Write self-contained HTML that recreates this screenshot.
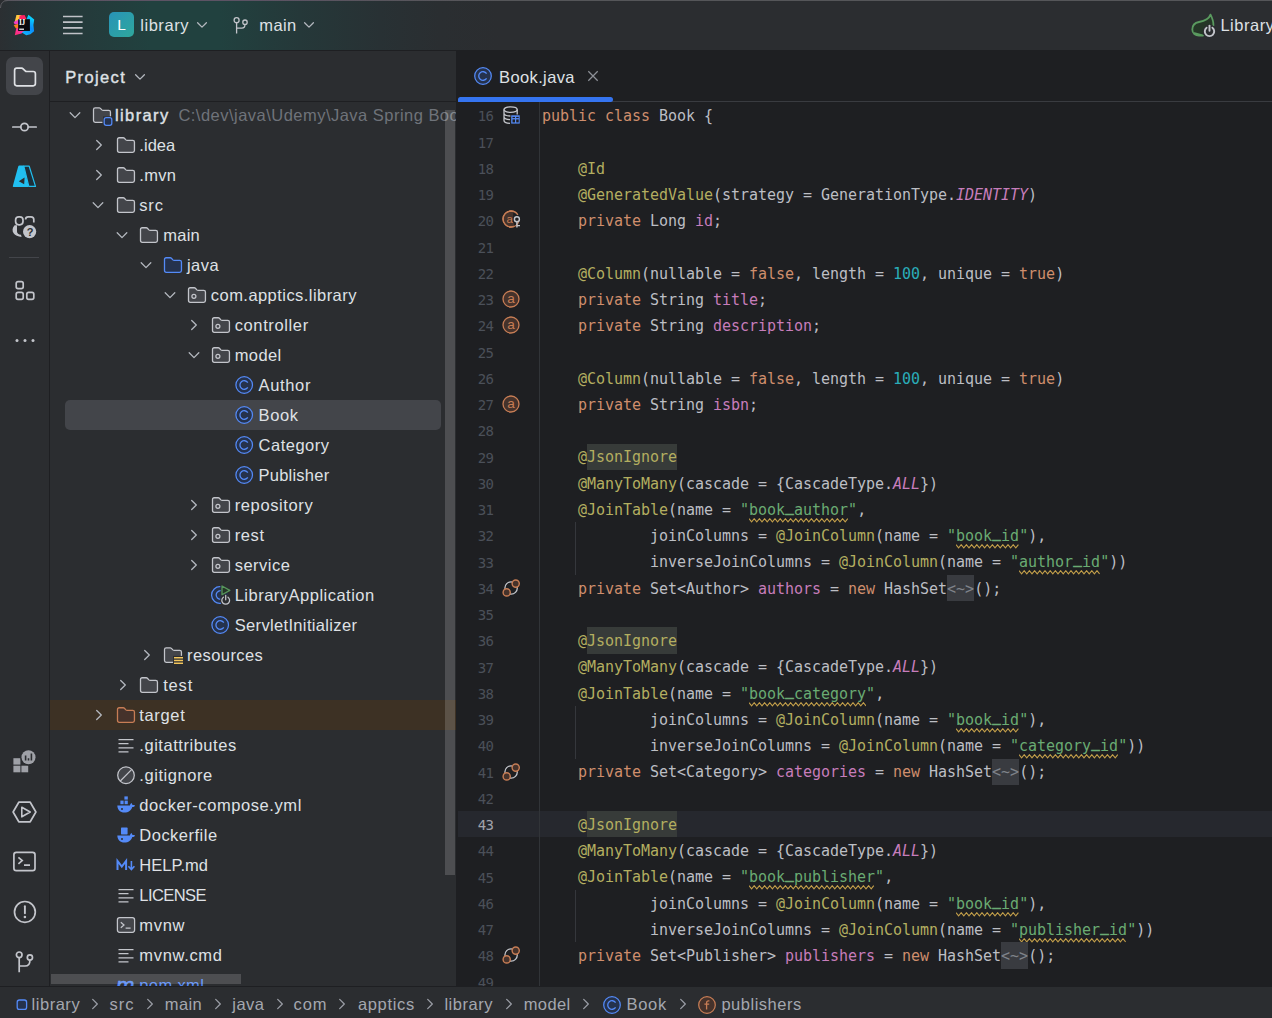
<!DOCTYPE html>
<html lang="en"><head><meta charset="utf-8"><title>library – Book.java</title>
<style>
*{box-sizing:border-box;margin:0;padding:0}
html,body{width:1272px;height:1018px;overflow:hidden;background:#2b2d30}
body{position:relative;font-family:"Liberation Sans",sans-serif;font-size:16.5px;letter-spacing:.3px;color:#dfe1e5;-webkit-font-smoothing:antialiased}
.abs{position:absolute}
#title{left:0;top:0;width:1272px;height:50px;background:linear-gradient(90deg,#2b2f32 0px,#283336 20px,#25393a 70px,#21413f 150px,#21413f 220px,#253839 300px,#283134 380px,#2a2e31 440px,#2b2d30 500px)}
#topline{left:0;top:0;width:1272px;height:1px;background:linear-gradient(90deg,#58565e 0px,#5c5364 120px,#5c5364 260px,#58555d 380px,#555659 500px)}
#stripe{left:0;top:51px;width:49px;height:935px;background:#2b2d30}
#stripeB{left:49px;top:51px;width:1px;height:935px;background:#1e1f22}
#hline{left:0;top:50px;width:1272px;height:1px;background:#1e1f22}
#proj{left:50px;top:51px;width:406px;height:935px;background:#2b2d30;overflow:hidden}
#projH{left:50px;top:101px;width:406px;height:1px;background:#1e1f22}
#split{left:456px;top:51px;width:2px;height:935px;background:#1e1f22}
#editor{left:458px;top:51px;width:814px;height:935px;background:#1e1f22;overflow:hidden}
#tabline{left:458px;top:101px;width:814px;height:1px;background:#393b40}
#tabul{left:458px;top:97px;width:155px;height:5px;background:#3574f0;border-radius:3px 3px 3px 1px}
#gutsep{left:539px;top:102px;width:1px;height:884px;background:#313438}
#status{left:0;top:986px;width:1272px;height:32px;background:#2b2d30;border-top:1px solid #1e1f22}
.t{position:absolute;white-space:pre;line-height:20px;height:20px}
.row{position:absolute;left:51px;width:405px;height:30px}
.code{position:absolute;left:542px;white-space:pre;font-family:"DejaVu Sans Mono","Liberation Mono",monospace;font-size:15px;letter-spacing:-.03px;color:#bcbec4;height:26px;line-height:26px}
.ln{position:absolute;left:463.4px;width:30px;text-align:right;white-space:pre;font-family:"DejaVu Sans Mono","Liberation Mono",monospace;font-size:14px;letter-spacing:-.6px;color:#4b5059;height:26px;line-height:26px}
.k{color:#cf8e6d}.a{color:#b3ae60}.s{color:#6aab73}.n{color:#2aacb8}.f{color:#c77dbb}.c{color:#c77dbb;font-style:italic}
.hl{}
.fold{color:#7f838a}
.w{position:relative;display:inline-block}

.us{position:relative;top:-2.6px;font-weight:bold}
svg.wv{position:absolute;left:0;top:21px;overflow:hidden}
svg{position:absolute;overflow:visible}
</style></head>
<body>
<div class="abs" id="title"></div><div class="abs" id="topline"></div>
<svg style="left:0;top:0" width="10" height="10" viewBox="0 0 10 10" fill="none"><path d="M0 0 H8 Q0 0 0 8 Z" fill="#2b2d30"/><path d="M.5 8 Q.5 .5 8 .5" stroke="#5a5b60" stroke-width="1"/></svg>
<div class="abs" id="hline"></div>
<div class="abs" id="stripe"></div><div class="abs" id="stripeB"></div>
<div class="abs" id="proj"></div><div class="abs" id="projH"></div><div class="abs" id="split"></div>
<div class="abs" id="editor"></div>
<div class="abs" style="left:458px;top:811.00px;width:814px;height:26.25px;background:#26282e"></div>
<div class="abs" id="gutsep"></div>
<div class="abs" style="left:575px;top:522.25px;width:1px;height:52.50px;background:#35373c"></div>
<div class="abs" style="left:575px;top:706.00px;width:1px;height:52.50px;background:#35373c"></div>
<div class="abs" style="left:575px;top:889.75px;width:1px;height:52.50px;background:#35373c"></div>
<div class="ln" style="top:103px;color:#4b5059">16</div>
<div class="code" style="top:103px"><span class="k">public</span> <span class="k">class</span> Book {</div>
<div class="ln" style="top:130px;color:#4b5059">17</div>
<div class="ln" style="top:156px;color:#4b5059">18</div>
<div class="code" style="top:156px">    <span class="a">@Id</span></div>
<div class="ln" style="top:182px;color:#4b5059">19</div>
<div class="code" style="top:182px">    <span class="a">@GeneratedValue</span>(strategy = GenerationType.<span class="c">IDENTITY</span>)</div>
<div class="ln" style="top:208px;color:#4b5059">20</div>
<div class="code" style="top:208px">    <span class="k">private</span> Long <span class="f">id</span>;</div>
<div class="ln" style="top:235px;color:#4b5059">21</div>
<div class="ln" style="top:261px;color:#4b5059">22</div>
<div class="code" style="top:261px">    <span class="a">@Column</span>(nullable = <span class="k">false</span>, length = <span class="n">100</span>, unique = <span class="k">true</span>)</div>
<div class="ln" style="top:287px;color:#4b5059">23</div>
<div class="code" style="top:287px">    <span class="k">private</span> String <span class="f">title</span>;</div>
<div class="ln" style="top:313px;color:#4b5059">24</div>
<div class="code" style="top:313px">    <span class="k">private</span> String <span class="f">description</span>;</div>
<div class="ln" style="top:340px;color:#4b5059">25</div>
<div class="ln" style="top:366px;color:#4b5059">26</div>
<div class="code" style="top:366px">    <span class="a">@Column</span>(nullable = <span class="k">false</span>, length = <span class="n">100</span>, unique = <span class="k">true</span>)</div>
<div class="ln" style="top:392px;color:#4b5059">27</div>
<div class="code" style="top:392px">    <span class="k">private</span> String <span class="f">isbn</span>;</div>
<div class="ln" style="top:418px;color:#4b5059">28</div>
<div class="ln" style="top:445px;color:#4b5059">29</div>
<div class="abs" style="left:587px;top:443.50px;width:90px;height:26.25px;background:#373b39"></div>
<div class="code" style="top:444px">    <span class="a">@</span><span class="a hl">JsonIgnore</span></div>
<div class="ln" style="top:471px;color:#4b5059">30</div>
<div class="code" style="top:471px">    <span class="a">@ManyToMany</span>(cascade = {CascadeType.<span class="c">ALL</span>})</div>
<div class="ln" style="top:497px;color:#4b5059">31</div>
<div class="code" style="top:497px">    <span class="a">@JoinTable</span>(name = <span class="s">&quot;</span><span class="s w">book<span class=us>_</span>author<svg class="wv" width="99" height="5" viewBox="0 0 99 5" fill="none"><polyline points="0.0,0.7 2.6,3.9 5.2,0.7 7.8,3.9 10.4,0.7 13.0,3.9 15.6,0.7 18.2,3.9 20.8,0.7 23.4,3.9 26.0,0.7 28.6,3.9 31.2,0.7 33.8,3.9 36.4,0.7 39.0,3.9 41.6,0.7 44.2,3.9 46.8,0.7 49.4,3.9 52.0,0.7 54.6,3.9 57.2,0.7 59.8,3.9 62.4,0.7 65.0,3.9 67.6,0.7 70.2,3.9 72.8,0.7 75.4,3.9 78.0,0.7 80.6,3.9 83.2,0.7 85.8,3.9 88.4,0.7 91.0,3.9 93.6,0.7 96.2,3.9 98.8,0.7" stroke="#c29e4a" stroke-width="1.1" fill="none"/></svg></span><span class="s">&quot;</span>,</div>
<div class="ln" style="top:523px;color:#4b5059">32</div>
<div class="code" style="top:523px">            joinColumns = <span class="a">@JoinColumn</span>(name = <span class="s">&quot;</span><span class="s w">book<span class=us>_</span>id<svg class="wv" width="63" height="5" viewBox="0 0 63 5" fill="none"><polyline points="0.0,0.7 2.6,3.9 5.2,0.7 7.8,3.9 10.4,0.7 13.0,3.9 15.6,0.7 18.2,3.9 20.8,0.7 23.4,3.9 26.0,0.7 28.6,3.9 31.2,0.7 33.8,3.9 36.4,0.7 39.0,3.9 41.6,0.7 44.2,3.9 46.8,0.7 49.4,3.9 52.0,0.7 54.6,3.9 57.2,0.7 59.8,3.9 62.4,0.7" stroke="#c29e4a" stroke-width="1.1" fill="none"/></svg></span><span class="s">&quot;</span>),</div>
<div class="ln" style="top:550px;color:#4b5059">33</div>
<div class="code" style="top:549px">            inverseJoinColumns = <span class="a">@JoinColumn</span>(name = <span class="s">&quot;</span><span class="s w">author<span class=us>_</span>id<svg class="wv" width="81" height="5" viewBox="0 0 81 5" fill="none"><polyline points="0.0,0.7 2.6,3.9 5.2,0.7 7.8,3.9 10.4,0.7 13.0,3.9 15.6,0.7 18.2,3.9 20.8,0.7 23.4,3.9 26.0,0.7 28.6,3.9 31.2,0.7 33.8,3.9 36.4,0.7 39.0,3.9 41.6,0.7 44.2,3.9 46.8,0.7 49.4,3.9 52.0,0.7 54.6,3.9 57.2,0.7 59.8,3.9 62.4,0.7 65.0,3.9 67.6,0.7 70.2,3.9 72.8,0.7 75.4,3.9 78.0,0.7 80.6,3.9" stroke="#c29e4a" stroke-width="1.1" fill="none"/></svg></span><span class="s">&quot;</span>))</div>
<div class="ln" style="top:576px;color:#4b5059">34</div>
<div class="abs" style="left:947px;top:574.75px;width:27px;height:26.25px;background:#393b40"></div>
<div class="code" style="top:576px">    <span class="k">private</span> Set&lt;Author&gt; <span class="f">authors</span> = <span class="k">new</span> HashSet<span class="fold">&lt;~&gt;</span>();</div>
<div class="ln" style="top:602px;color:#4b5059">35</div>
<div class="ln" style="top:628px;color:#4b5059">36</div>
<div class="abs" style="left:587px;top:627.25px;width:90px;height:26.25px;background:#373b39"></div>
<div class="code" style="top:628px">    <span class="a">@</span><span class="a hl">JsonIgnore</span></div>
<div class="ln" style="top:655px;color:#4b5059">37</div>
<div class="code" style="top:654px">    <span class="a">@ManyToMany</span>(cascade = {CascadeType.<span class="c">ALL</span>})</div>
<div class="ln" style="top:681px;color:#4b5059">38</div>
<div class="code" style="top:681px">    <span class="a">@JoinTable</span>(name = <span class="s">&quot;</span><span class="s w">book<span class=us>_</span>category<svg class="wv" width="117" height="5" viewBox="0 0 117 5" fill="none"><polyline points="0.0,0.7 2.6,3.9 5.2,0.7 7.8,3.9 10.4,0.7 13.0,3.9 15.6,0.7 18.2,3.9 20.8,0.7 23.4,3.9 26.0,0.7 28.6,3.9 31.2,0.7 33.8,3.9 36.4,0.7 39.0,3.9 41.6,0.7 44.2,3.9 46.8,0.7 49.4,3.9 52.0,0.7 54.6,3.9 57.2,0.7 59.8,3.9 62.4,0.7 65.0,3.9 67.6,0.7 70.2,3.9 72.8,0.7 75.4,3.9 78.0,0.7 80.6,3.9 83.2,0.7 85.8,3.9 88.4,0.7 91.0,3.9 93.6,0.7 96.2,3.9 98.8,0.7 101.4,3.9 104.0,0.7 106.6,3.9 109.2,0.7 111.8,3.9 114.4,0.7 117.0,3.9" stroke="#c29e4a" stroke-width="1.1" fill="none"/></svg></span><span class="s">&quot;</span>,</div>
<div class="ln" style="top:707px;color:#4b5059">39</div>
<div class="code" style="top:707px">            joinColumns = <span class="a">@JoinColumn</span>(name = <span class="s">&quot;</span><span class="s w">book<span class=us>_</span>id<svg class="wv" width="63" height="5" viewBox="0 0 63 5" fill="none"><polyline points="0.0,0.7 2.6,3.9 5.2,0.7 7.8,3.9 10.4,0.7 13.0,3.9 15.6,0.7 18.2,3.9 20.8,0.7 23.4,3.9 26.0,0.7 28.6,3.9 31.2,0.7 33.8,3.9 36.4,0.7 39.0,3.9 41.6,0.7 44.2,3.9 46.8,0.7 49.4,3.9 52.0,0.7 54.6,3.9 57.2,0.7 59.8,3.9 62.4,0.7" stroke="#c29e4a" stroke-width="1.1" fill="none"/></svg></span><span class="s">&quot;</span>),</div>
<div class="ln" style="top:733px;color:#4b5059">40</div>
<div class="code" style="top:733px">            inverseJoinColumns = <span class="a">@JoinColumn</span>(name = <span class="s">&quot;</span><span class="s w">category<span class=us>_</span>id<svg class="wv" width="99" height="5" viewBox="0 0 99 5" fill="none"><polyline points="0.0,0.7 2.6,3.9 5.2,0.7 7.8,3.9 10.4,0.7 13.0,3.9 15.6,0.7 18.2,3.9 20.8,0.7 23.4,3.9 26.0,0.7 28.6,3.9 31.2,0.7 33.8,3.9 36.4,0.7 39.0,3.9 41.6,0.7 44.2,3.9 46.8,0.7 49.4,3.9 52.0,0.7 54.6,3.9 57.2,0.7 59.8,3.9 62.4,0.7 65.0,3.9 67.6,0.7 70.2,3.9 72.8,0.7 75.4,3.9 78.0,0.7 80.6,3.9 83.2,0.7 85.8,3.9 88.4,0.7 91.0,3.9 93.6,0.7 96.2,3.9 98.8,0.7" stroke="#c29e4a" stroke-width="1.1" fill="none"/></svg></span><span class="s">&quot;</span>))</div>
<div class="ln" style="top:760px;color:#4b5059">41</div>
<div class="abs" style="left:992px;top:758.50px;width:27px;height:26.25px;background:#393b40"></div>
<div class="code" style="top:759px">    <span class="k">private</span> Set&lt;Category&gt; <span class="f">categories</span> = <span class="k">new</span> HashSet<span class="fold">&lt;~&gt;</span>();</div>
<div class="ln" style="top:786px;color:#4b5059">42</div>
<div class="ln" style="top:812px;color:#a1a3ab">43</div>
<div class="abs" style="left:587px;top:811.00px;width:90px;height:26.25px;background:#373b39"></div>
<div class="code" style="top:812px">    <span class="a">@</span><span class="a hl">JsonIgnore</span></div>
<div class="ln" style="top:838px;color:#4b5059">44</div>
<div class="code" style="top:838px">    <span class="a">@ManyToMany</span>(cascade = {CascadeType.<span class="c">ALL</span>})</div>
<div class="ln" style="top:865px;color:#4b5059">45</div>
<div class="code" style="top:864px">    <span class="a">@JoinTable</span>(name = <span class="s">&quot;</span><span class="s w">book<span class=us>_</span>publisher<svg class="wv" width="126" height="5" viewBox="0 0 126 5" fill="none"><polyline points="0.0,0.7 2.6,3.9 5.2,0.7 7.8,3.9 10.4,0.7 13.0,3.9 15.6,0.7 18.2,3.9 20.8,0.7 23.4,3.9 26.0,0.7 28.6,3.9 31.2,0.7 33.8,3.9 36.4,0.7 39.0,3.9 41.6,0.7 44.2,3.9 46.8,0.7 49.4,3.9 52.0,0.7 54.6,3.9 57.2,0.7 59.8,3.9 62.4,0.7 65.0,3.9 67.6,0.7 70.2,3.9 72.8,0.7 75.4,3.9 78.0,0.7 80.6,3.9 83.2,0.7 85.8,3.9 88.4,0.7 91.0,3.9 93.6,0.7 96.2,3.9 98.8,0.7 101.4,3.9 104.0,0.7 106.6,3.9 109.2,0.7 111.8,3.9 114.4,0.7 117.0,3.9 119.6,0.7 122.2,3.9 124.8,0.7" stroke="#c29e4a" stroke-width="1.1" fill="none"/></svg></span><span class="s">&quot;</span>,</div>
<div class="ln" style="top:891px;color:#4b5059">46</div>
<div class="code" style="top:891px">            joinColumns = <span class="a">@JoinColumn</span>(name = <span class="s">&quot;</span><span class="s w">book<span class=us>_</span>id<svg class="wv" width="63" height="5" viewBox="0 0 63 5" fill="none"><polyline points="0.0,0.7 2.6,3.9 5.2,0.7 7.8,3.9 10.4,0.7 13.0,3.9 15.6,0.7 18.2,3.9 20.8,0.7 23.4,3.9 26.0,0.7 28.6,3.9 31.2,0.7 33.8,3.9 36.4,0.7 39.0,3.9 41.6,0.7 44.2,3.9 46.8,0.7 49.4,3.9 52.0,0.7 54.6,3.9 57.2,0.7 59.8,3.9 62.4,0.7" stroke="#c29e4a" stroke-width="1.1" fill="none"/></svg></span><span class="s">&quot;</span>),</div>
<div class="ln" style="top:917px;color:#4b5059">47</div>
<div class="code" style="top:917px">            inverseJoinColumns = <span class="a">@JoinColumn</span>(name = <span class="s">&quot;</span><span class="s w">publisher<span class=us>_</span>id<svg class="wv" width="108" height="5" viewBox="0 0 108 5" fill="none"><polyline points="0.0,0.7 2.6,3.9 5.2,0.7 7.8,3.9 10.4,0.7 13.0,3.9 15.6,0.7 18.2,3.9 20.8,0.7 23.4,3.9 26.0,0.7 28.6,3.9 31.2,0.7 33.8,3.9 36.4,0.7 39.0,3.9 41.6,0.7 44.2,3.9 46.8,0.7 49.4,3.9 52.0,0.7 54.6,3.9 57.2,0.7 59.8,3.9 62.4,0.7 65.0,3.9 67.6,0.7 70.2,3.9 72.8,0.7 75.4,3.9 78.0,0.7 80.6,3.9 83.2,0.7 85.8,3.9 88.4,0.7 91.0,3.9 93.6,0.7 96.2,3.9 98.8,0.7 101.4,3.9 104.0,0.7 106.6,3.9" stroke="#c29e4a" stroke-width="1.1" fill="none"/></svg></span><span class="s">&quot;</span>))</div>
<div class="ln" style="top:943px;color:#4b5059">48</div>
<div class="abs" style="left:1001px;top:942.25px;width:27px;height:26.25px;background:#393b40"></div>
<div class="code" style="top:943px">    <span class="k">private</span> Set&lt;Publisher&gt; <span class="f">publishers</span> = <span class="k">new</span> HashSet<span class="fold">&lt;~&gt;</span>();</div>
<div class="ln" style="top:970px;color:#4b5059">49</div>
<div class="abs" id="tabline"></div><div class="abs" id="tabul"></div>
<div class="abs" id="status"></div>
<div class="abs" style="left:50px;top:102px;width:406px;height:884px;overflow:hidden"><div class="abs" style="left:1px;top:0;width:405px;height:884px">
<div class="abs" style="left:-1px;top:598px;width:406px;height:30px;background:#3d3124"></div>
<div class="abs" style="left:14px;top:298px;width:376px;height:30px;background:#43454a;border-radius:5px"></div>
<svg style="left:16.6px;top:6.199999999999999px" width="14" height="14" viewBox="0 0 14 14" fill="none"><path d="M2.2 4.8 L7 9.6 L11.8 4.8" stroke="#b4b8bf" stroke-width="1.3" fill="none" stroke-linecap="round" stroke-linejoin="round"/></svg>
<svg style="left:41px;top:3px" width="20" height="20" viewBox="0 0 20 20" fill="none"><path d="M10 17.35 H3.2 Q1.5 17.35 1.5 15.6 V4.5 Q1.5 2.75 3.2 2.75 H7.2 Q7.9 2.75 8.4 3.3 L9.9 4.9 Q10.4 5.4 11.1 5.4 H16.7 Q18.45 5.4 18.45 7.1 V11" fill="#43454a" stroke="#c3c5cb" stroke-width="1.25" stroke-linejoin="round" stroke-linecap="round"/><rect x="11" y="11.5" width="10" height="10" fill="#2b2d30"/><rect x="12.2" y="12.7" width="7.6" height="7.6" rx="2" fill="#25324d" stroke="#548af7" stroke-width="1.25"/></svg>
<div class="t" style="left:63.9px;top:3px;-webkit-text-stroke:.4px #dfe1e5;letter-spacing:1.411px">library</div>
<div class="t" style="left:127.4px;top:3px;color:#6f737a;letter-spacing:0.477px">C:\dev\java\Udemy\Java Spring Boot\library</div>
<svg style="left:40.99999999999999px;top:36px" width="14" height="14" viewBox="0 0 14 14" fill="none"><path d="M4.7 2.5 L9.3 7 L4.7 11.5" stroke="#b4b8bf" stroke-width="1.3" fill="none" stroke-linecap="round" stroke-linejoin="round"/></svg>
<svg style="left:64.6px;top:33px" width="20" height="20" viewBox="0 0 20 20" fill="none"><path d="M1.5 4.5 Q1.5 2.75 3.2 2.75 H7.2 Q7.9 2.75 8.4 3.3 L9.9 4.9 Q10.4 5.4 11.1 5.4 H16.7 Q18.45 5.4 18.45 7.1 V15.6 Q18.45 17.35 16.7 17.35 H3.2 Q1.5 17.35 1.5 15.6 Z" fill="#43454a" stroke="#c3c5cb" stroke-width="1.3" stroke-linejoin="round"/></svg>
<div class="t" style="left:88.30000000000001px;top:33px;letter-spacing:0.044px">.idea</div>
<svg style="left:40.99999999999999px;top:66px" width="14" height="14" viewBox="0 0 14 14" fill="none"><path d="M4.7 2.5 L9.3 7 L4.7 11.5" stroke="#b4b8bf" stroke-width="1.3" fill="none" stroke-linecap="round" stroke-linejoin="round"/></svg>
<svg style="left:64.6px;top:63px" width="20" height="20" viewBox="0 0 20 20" fill="none"><path d="M1.5 4.5 Q1.5 2.75 3.2 2.75 H7.2 Q7.9 2.75 8.4 3.3 L9.9 4.9 Q10.4 5.4 11.1 5.4 H16.7 Q18.45 5.4 18.45 7.1 V15.6 Q18.45 17.35 16.7 17.35 H3.2 Q1.5 17.35 1.5 15.6 Z" fill="#43454a" stroke="#c3c5cb" stroke-width="1.3" stroke-linejoin="round"/></svg>
<div class="t" style="left:88.30000000000001px;top:63px;letter-spacing:0.261px">.mvn</div>
<svg style="left:40.199999999999996px;top:96.2px" width="14" height="14" viewBox="0 0 14 14" fill="none"><path d="M2.2 4.8 L7 9.6 L11.8 4.8" stroke="#b4b8bf" stroke-width="1.3" fill="none" stroke-linecap="round" stroke-linejoin="round"/></svg>
<svg style="left:64.6px;top:93px" width="20" height="20" viewBox="0 0 20 20" fill="none"><path d="M1.5 4.5 Q1.5 2.75 3.2 2.75 H7.2 Q7.9 2.75 8.4 3.3 L9.9 4.9 Q10.4 5.4 11.1 5.4 H16.7 Q18.45 5.4 18.45 7.1 V15.6 Q18.45 17.35 16.7 17.35 H3.2 Q1.5 17.35 1.5 15.6 Z" fill="#43454a" stroke="#c3c5cb" stroke-width="1.3" stroke-linejoin="round"/></svg>
<div class="t" style="left:88.30000000000001px;top:93px;letter-spacing:0.802px">src</div>
<svg style="left:64.05000000000001px;top:126.19999999999999px" width="14" height="14" viewBox="0 0 14 14" fill="none"><path d="M2.2 4.8 L7 9.6 L11.8 4.8" stroke="#b4b8bf" stroke-width="1.3" fill="none" stroke-linecap="round" stroke-linejoin="round"/></svg>
<svg style="left:88.45px;top:123px" width="20" height="20" viewBox="0 0 20 20" fill="none"><path d="M1.5 4.5 Q1.5 2.75 3.2 2.75 H7.2 Q7.9 2.75 8.4 3.3 L9.9 4.9 Q10.4 5.4 11.1 5.4 H16.7 Q18.45 5.4 18.45 7.1 V15.6 Q18.45 17.35 16.7 17.35 H3.2 Q1.5 17.35 1.5 15.6 Z" fill="#43454a" stroke="#c3c5cb" stroke-width="1.3" stroke-linejoin="round"/></svg>
<div class="t" style="left:112.15px;top:123px;letter-spacing:0.284px">main</div>
<svg style="left:87.9px;top:156.2px" width="14" height="14" viewBox="0 0 14 14" fill="none"><path d="M2.2 4.8 L7 9.6 L11.8 4.8" stroke="#b4b8bf" stroke-width="1.3" fill="none" stroke-linecap="round" stroke-linejoin="round"/></svg>
<svg style="left:112.3px;top:153px" width="20" height="20" viewBox="0 0 20 20" fill="none"><path d="M1.5 4.5 Q1.5 2.75 3.2 2.75 H7.2 Q7.9 2.75 8.4 3.3 L9.9 4.9 Q10.4 5.4 11.1 5.4 H16.7 Q18.45 5.4 18.45 7.1 V15.6 Q18.45 17.35 16.7 17.35 H3.2 Q1.5 17.35 1.5 15.6 Z" fill="#25324d" stroke="#548af7" stroke-width="1.3" stroke-linejoin="round"/></svg>
<div class="t" style="left:136.0px;top:153px;letter-spacing:0.433px">java</div>
<svg style="left:111.75px;top:186.2px" width="14" height="14" viewBox="0 0 14 14" fill="none"><path d="M2.2 4.8 L7 9.6 L11.8 4.8" stroke="#b4b8bf" stroke-width="1.3" fill="none" stroke-linecap="round" stroke-linejoin="round"/></svg>
<svg style="left:136.15px;top:183px" width="20" height="20" viewBox="0 0 20 20" fill="none"><path d="M1.5 4.5 Q1.5 2.75 3.2 2.75 H7.2 Q7.9 2.75 8.4 3.3 L9.9 4.9 Q10.4 5.4 11.1 5.4 H16.7 Q18.45 5.4 18.45 7.1 V15.6 Q18.45 17.35 16.7 17.35 H3.2 Q1.5 17.35 1.5 15.6 Z" fill="#43454a" stroke="#c3c5cb" stroke-width="1.3" stroke-linejoin="round"/><circle cx="6.9" cy="11.3" r="2" stroke="#c3c5cb" stroke-width="1.25"/></svg>
<div class="t" style="left:159.85px;top:183px;letter-spacing:0.445px">com.apptics.library</div>
<svg style="left:136.4px;top:216px" width="14" height="14" viewBox="0 0 14 14" fill="none"><path d="M4.7 2.5 L9.3 7 L4.7 11.5" stroke="#b4b8bf" stroke-width="1.3" fill="none" stroke-linecap="round" stroke-linejoin="round"/></svg>
<svg style="left:160.0px;top:213px" width="20" height="20" viewBox="0 0 20 20" fill="none"><path d="M1.5 4.5 Q1.5 2.75 3.2 2.75 H7.2 Q7.9 2.75 8.4 3.3 L9.9 4.9 Q10.4 5.4 11.1 5.4 H16.7 Q18.45 5.4 18.45 7.1 V15.6 Q18.45 17.35 16.7 17.35 H3.2 Q1.5 17.35 1.5 15.6 Z" fill="#43454a" stroke="#c3c5cb" stroke-width="1.3" stroke-linejoin="round"/><circle cx="6.9" cy="11.3" r="2" stroke="#c3c5cb" stroke-width="1.25"/></svg>
<div class="t" style="left:183.70000000000002px;top:213px;letter-spacing:0.624px">controller</div>
<svg style="left:135.6px;top:246.2px" width="14" height="14" viewBox="0 0 14 14" fill="none"><path d="M2.2 4.8 L7 9.6 L11.8 4.8" stroke="#b4b8bf" stroke-width="1.3" fill="none" stroke-linecap="round" stroke-linejoin="round"/></svg>
<svg style="left:160.0px;top:243px" width="20" height="20" viewBox="0 0 20 20" fill="none"><path d="M1.5 4.5 Q1.5 2.75 3.2 2.75 H7.2 Q7.9 2.75 8.4 3.3 L9.9 4.9 Q10.4 5.4 11.1 5.4 H16.7 Q18.45 5.4 18.45 7.1 V15.6 Q18.45 17.35 16.7 17.35 H3.2 Q1.5 17.35 1.5 15.6 Z" fill="#43454a" stroke="#c3c5cb" stroke-width="1.3" stroke-linejoin="round"/><circle cx="6.9" cy="11.3" r="2" stroke="#c3c5cb" stroke-width="1.25"/></svg>
<div class="t" style="left:183.70000000000002px;top:243px;letter-spacing:0.392px">model</div>
<svg style="left:183.85px;top:273px" width="20" height="20" viewBox="0 0 20 20" fill="none"><circle cx="9.2" cy="10" r="8.3" fill="#25324d" stroke="#548af7" stroke-width="1.25"/><path d="M12.8 7.6 A4.3 4.3 0 1 0 12.8 12.4" stroke="#548af7" stroke-width="1.3" fill="none"/></svg>
<div class="t" style="left:207.55px;top:273px;letter-spacing:0.648px">Author</div>
<svg style="left:183.85px;top:303px" width="20" height="20" viewBox="0 0 20 20" fill="none"><circle cx="9.2" cy="10" r="8.3" fill="#25324d" stroke="#548af7" stroke-width="1.25"/><path d="M12.8 7.6 A4.3 4.3 0 1 0 12.8 12.4" stroke="#548af7" stroke-width="1.3" fill="none"/></svg>
<div class="t" style="left:207.55px;top:303px;letter-spacing:0.648px">Book</div>
<svg style="left:183.85px;top:333px" width="20" height="20" viewBox="0 0 20 20" fill="none"><circle cx="9.2" cy="10" r="8.3" fill="#25324d" stroke="#548af7" stroke-width="1.25"/><path d="M12.8 7.6 A4.3 4.3 0 1 0 12.8 12.4" stroke="#548af7" stroke-width="1.3" fill="none"/></svg>
<div class="t" style="left:207.55px;top:333px;letter-spacing:0.494px">Category</div>
<svg style="left:183.85px;top:363px" width="20" height="20" viewBox="0 0 20 20" fill="none"><circle cx="9.2" cy="10" r="8.3" fill="#25324d" stroke="#548af7" stroke-width="1.25"/><path d="M12.8 7.6 A4.3 4.3 0 1 0 12.8 12.4" stroke="#548af7" stroke-width="1.3" fill="none"/></svg>
<div class="t" style="left:207.55px;top:363px;letter-spacing:0.224px">Publisher</div>
<svg style="left:136.4px;top:396px" width="14" height="14" viewBox="0 0 14 14" fill="none"><path d="M4.7 2.5 L9.3 7 L4.7 11.5" stroke="#b4b8bf" stroke-width="1.3" fill="none" stroke-linecap="round" stroke-linejoin="round"/></svg>
<svg style="left:160.0px;top:393px" width="20" height="20" viewBox="0 0 20 20" fill="none"><path d="M1.5 4.5 Q1.5 2.75 3.2 2.75 H7.2 Q7.9 2.75 8.4 3.3 L9.9 4.9 Q10.4 5.4 11.1 5.4 H16.7 Q18.45 5.4 18.45 7.1 V15.6 Q18.45 17.35 16.7 17.35 H3.2 Q1.5 17.35 1.5 15.6 Z" fill="#43454a" stroke="#c3c5cb" stroke-width="1.3" stroke-linejoin="round"/><circle cx="6.9" cy="11.3" r="2" stroke="#c3c5cb" stroke-width="1.25"/></svg>
<div class="t" style="left:183.70000000000002px;top:393px;letter-spacing:0.615px">repository</div>
<svg style="left:136.4px;top:426px" width="14" height="14" viewBox="0 0 14 14" fill="none"><path d="M4.7 2.5 L9.3 7 L4.7 11.5" stroke="#b4b8bf" stroke-width="1.3" fill="none" stroke-linecap="round" stroke-linejoin="round"/></svg>
<svg style="left:160.0px;top:423px" width="20" height="20" viewBox="0 0 20 20" fill="none"><path d="M1.5 4.5 Q1.5 2.75 3.2 2.75 H7.2 Q7.9 2.75 8.4 3.3 L9.9 4.9 Q10.4 5.4 11.1 5.4 H16.7 Q18.45 5.4 18.45 7.1 V15.6 Q18.45 17.35 16.7 17.35 H3.2 Q1.5 17.35 1.5 15.6 Z" fill="#43454a" stroke="#c3c5cb" stroke-width="1.3" stroke-linejoin="round"/><circle cx="6.9" cy="11.3" r="2" stroke="#c3c5cb" stroke-width="1.25"/></svg>
<div class="t" style="left:183.70000000000002px;top:423px;letter-spacing:0.624px">rest</div>
<svg style="left:136.4px;top:456px" width="14" height="14" viewBox="0 0 14 14" fill="none"><path d="M4.7 2.5 L9.3 7 L4.7 11.5" stroke="#b4b8bf" stroke-width="1.3" fill="none" stroke-linecap="round" stroke-linejoin="round"/></svg>
<svg style="left:160.0px;top:453px" width="20" height="20" viewBox="0 0 20 20" fill="none"><path d="M1.5 4.5 Q1.5 2.75 3.2 2.75 H7.2 Q7.9 2.75 8.4 3.3 L9.9 4.9 Q10.4 5.4 11.1 5.4 H16.7 Q18.45 5.4 18.45 7.1 V15.6 Q18.45 17.35 16.7 17.35 H3.2 Q1.5 17.35 1.5 15.6 Z" fill="#43454a" stroke="#c3c5cb" stroke-width="1.3" stroke-linejoin="round"/><circle cx="6.9" cy="11.3" r="2" stroke="#c3c5cb" stroke-width="1.25"/></svg>
<div class="t" style="left:183.70000000000002px;top:453px;letter-spacing:0.491px">service</div>
<svg style="left:160.0px;top:483px" width="20" height="20" viewBox="0 0 20 20" fill="none"><g transform="translate(-.8 0)"><path d="M10.5 1.75 A8.3 8.3 0 1 0 11 18.2" fill="#25324d" stroke="#548af7" stroke-width="1.25"/><path d="M10.5 1.75 A8.3 8.3 0 0 1 11 18.2 Z" fill="#25324d"/><path d="M12.5 6.3 A4.3 4.3 0 1 0 11 14.2" stroke="#548af7" stroke-width="1.3" fill="none"/></g><path d="M9.6 -1 L21 5.4 L9.6 11.6 Z" fill="#2b2d30"/><circle cx="14.7" cy="15.2" r="5.6" fill="#2b2d30"/><path d="M11 1 L18.8 5.4 L11 9.8 Z" fill="#253627" stroke="#57965c" stroke-width="1.3" stroke-linejoin="round"/><path d="M12.4 12.2 A3.9 3.9 0 1 0 17 12.2" stroke="#c3c5cb" stroke-width="1.25" fill="none" stroke-linecap="round"/><path d="M14.7 10.4 V14.8" stroke="#c3c5cb" stroke-width="1.25" stroke-linecap="round"/></svg>
<div class="t" style="left:183.70000000000002px;top:483px;letter-spacing:0.491px">LibraryApplication</div>
<svg style="left:160.0px;top:513px" width="20" height="20" viewBox="0 0 20 20" fill="none"><circle cx="9.2" cy="10" r="8.3" fill="#25324d" stroke="#548af7" stroke-width="1.25"/><path d="M12.8 7.6 A4.3 4.3 0 1 0 12.8 12.4" stroke="#548af7" stroke-width="1.3" fill="none"/></svg>
<div class="t" style="left:183.70000000000002px;top:513px;letter-spacing:0.341px">ServletInitializer</div>
<svg style="left:88.69999999999999px;top:546px" width="14" height="14" viewBox="0 0 14 14" fill="none"><path d="M4.7 2.5 L9.3 7 L4.7 11.5" stroke="#b4b8bf" stroke-width="1.3" fill="none" stroke-linecap="round" stroke-linejoin="round"/></svg>
<svg style="left:112.3px;top:543px" width="20" height="20" viewBox="0 0 20 20" fill="none"><path d="M10 17.35 H3.2 Q1.5 17.35 1.5 15.6 V4.5 Q1.5 2.75 3.2 2.75 H7.2 Q7.9 2.75 8.4 3.3 L9.9 4.9 Q10.4 5.4 11.1 5.4 H16.7 Q18.45 5.4 18.45 7.1 V11" fill="#43454a" stroke="#c3c5cb" stroke-width="1.25" stroke-linejoin="round" stroke-linecap="round"/><rect x="10" y="10.9" width="11" height="9" fill="#2b2d30"/><path d="M11 12.7 H20 M11 15.5 H20 M11 18.3 H20" stroke="#f2c55c" stroke-width="1.4"/></svg>
<div class="t" style="left:136.0px;top:543px;letter-spacing:0.428px">resources</div>
<svg style="left:64.85px;top:576px" width="14" height="14" viewBox="0 0 14 14" fill="none"><path d="M4.7 2.5 L9.3 7 L4.7 11.5" stroke="#b4b8bf" stroke-width="1.3" fill="none" stroke-linecap="round" stroke-linejoin="round"/></svg>
<svg style="left:88.45px;top:573px" width="20" height="20" viewBox="0 0 20 20" fill="none"><path d="M1.5 4.5 Q1.5 2.75 3.2 2.75 H7.2 Q7.9 2.75 8.4 3.3 L9.9 4.9 Q10.4 5.4 11.1 5.4 H16.7 Q18.45 5.4 18.45 7.1 V15.6 Q18.45 17.35 16.7 17.35 H3.2 Q1.5 17.35 1.5 15.6 Z" fill="#43454a" stroke="#c3c5cb" stroke-width="1.3" stroke-linejoin="round"/></svg>
<div class="t" style="left:112.15px;top:573px;letter-spacing:0.851px">test</div>
<svg style="left:40.99999999999999px;top:606px" width="14" height="14" viewBox="0 0 14 14" fill="none"><path d="M4.7 2.5 L9.3 7 L4.7 11.5" stroke="#b4b8bf" stroke-width="1.3" fill="none" stroke-linecap="round" stroke-linejoin="round"/></svg>
<svg style="left:64.6px;top:603px" width="20" height="20" viewBox="0 0 20 20" fill="none"><path d="M1.5 4.5 Q1.5 2.75 3.2 2.75 H7.2 Q7.9 2.75 8.4 3.3 L9.9 4.9 Q10.4 5.4 11.1 5.4 H16.7 Q18.45 5.4 18.45 7.1 V15.6 Q18.45 17.35 16.7 17.35 H3.2 Q1.5 17.35 1.5 15.6 Z" fill="#45322b" stroke="#c77d55" stroke-width="1.3" stroke-linejoin="round"/></svg>
<div class="t" style="left:88.30000000000001px;top:603px;letter-spacing:0.651px">target</div>
<svg style="left:64.6px;top:633px" width="20" height="20" viewBox="0 0 20 20" fill="none"><path d="M2.5 4.6 H17.5 M2.5 8.7 H12.5 M2.5 12.8 H17.5 M2.5 16.9 H12.5" stroke="#c3c5cb" stroke-width="1.3"/></svg>
<div class="t" style="left:88.30000000000001px;top:633px;letter-spacing:0.537px">.gitattributes</div>
<svg style="left:64.6px;top:663px" width="20" height="20" viewBox="0 0 20 20" fill="none"><circle cx="10" cy="10.2" r="8.3" fill="#43454a" stroke="#c3c5cb" stroke-width="1.25"/><path d="M4.3 16 L15.8 4.4" stroke="#c3c5cb" stroke-width="1.25"/></svg>
<div class="t" style="left:88.30000000000001px;top:663px;letter-spacing:0.562px">.gitignore</div>
<svg style="left:64.6px;top:693px" width="20" height="20" viewBox="0 0 20 20" fill="none"><path d="M1.3 10.6 H13.9 C14.1 9.5 14.6 8.7 15.4 8.1 C16.1 8.6 16.4 9.3 16.4 10 C17.3 9.8 18.3 9.9 19 10.4 C18.6 11.5 17.6 12 16.3 12 C15.3 15.2 12.6 17.6 8.4 17.6 C4.2 17.6 1.6 15.4 1.3 10.6 Z" fill="#548af7"/><circle cx="6" cy="14" r="1" fill="#2b2d30"/><rect x="8.4" y="1.4" width="3.4" height="3.2" fill="#548af7"/><rect x="4.4" y="5.6" width="3.2" height="3.6" fill="#548af7"/><rect x="8.6" y="5.6" width="3.2" height="3.6" fill="#548af7"/></svg>
<div class="t" style="left:88.30000000000001px;top:693px;letter-spacing:0.577px">docker-compose.yml</div>
<svg style="left:64.6px;top:723px" width="20" height="20" viewBox="0 0 20 20" fill="none"><path d="M1.3 10.6 H13.9 C14.1 9.5 14.6 8.7 15.4 8.1 C16.1 8.6 16.4 9.3 16.4 10 C17.3 9.8 18.3 9.9 19 10.4 C18.6 11.5 17.6 12 16.3 12 C15.3 15.2 12.6 17.6 8.4 17.6 C4.2 17.6 1.6 15.4 1.3 10.6 Z" fill="#548af7"/><circle cx="6" cy="14" r="1" fill="#2b2d30"/><rect x="5" y="2.6" width="6.6" height="6.8" rx=".6" fill="#548af7"/></svg>
<div class="t" style="left:88.30000000000001px;top:723px;letter-spacing:0.494px">Dockerfile</div>
<svg style="left:64.6px;top:753px" width="20" height="20" viewBox="0 0 20 20" fill="none"><path d="M1.5 15 V6 L5.8 11.6 L10.1 6 V15" stroke="#548af7" stroke-width="2" fill="none" stroke-linejoin="miter"/><path d="M15.4 6 V14.4 M12.4 11.2 L15.4 14.6 L18.4 11.2" stroke="#548af7" stroke-width="1.6" fill="none"/></svg>
<div class="t" style="left:88.30000000000001px;top:753px;letter-spacing:0.031px">HELP.md</div>
<svg style="left:64.6px;top:783px" width="20" height="20" viewBox="0 0 20 20" fill="none"><path d="M2.5 4.6 H17.5 M2.5 8.7 H12.5 M2.5 12.8 H17.5 M2.5 16.9 H12.5" stroke="#c3c5cb" stroke-width="1.3"/></svg>
<div class="t" style="left:88.30000000000001px;top:783px;letter-spacing:-0.558px">LICENSE</div>
<svg style="left:64.6px;top:813px" width="20" height="20" viewBox="0 0 20 20" fill="none"><rect x="1.4" y="2.7" width="17.2" height="14.6" rx="2.2" fill="#43454a" stroke="#c3c5cb" stroke-width="1.25"/><path d="M4.8 7.2 L8 10 L4.8 12.8 M9.6 13.2 H14.6" stroke="#c3c5cb" stroke-width="1.25" fill="none"/></svg>
<div class="t" style="left:88.30000000000001px;top:813px;letter-spacing:0.703px">mvnw</div>
<svg style="left:64.6px;top:843px" width="20" height="20" viewBox="0 0 20 20" fill="none"><path d="M2.5 4.6 H17.5 M2.5 8.7 H12.5 M2.5 12.8 H17.5 M2.5 16.9 H12.5" stroke="#c3c5cb" stroke-width="1.3"/></svg>
<div class="t" style="left:88.30000000000001px;top:843px;letter-spacing:0.671px">mvnw.cmd</div>
<svg style="left:64.6px;top:873px" width="20" height="20" viewBox="0 0 20 20" fill="none"><text x="0" y="17.5" font-family="Liberation Sans,sans-serif" font-style="italic" font-size="22" fill="#548af7" stroke="#548af7" stroke-width=".5" letter-spacing="0">m</text></svg>
<div class="t" style="left:88.30000000000001px;top:873px;color:#548af7;letter-spacing:0.365px">pom.xml</div>
<div class="abs" style="left:394px;top:8px;width:10px;height:765px;background:rgba(255,255,255,.16)"></div>
<div class="abs" style="left:0;top:872px;width:190px;height:10px;background:rgba(255,255,255,.16)"></div>
</div></div><svg style="left:13px;top:14px" width="22" height="22" viewBox="0 0 22 22" fill="none"><defs><linearGradient id="ijb" x1=".7" y1="0" x2=".3" y2="1"><stop offset="0" stop-color="#0ae0ff"/><stop offset=".55" stop-color="#0a8cfb"/><stop offset="1" stop-color="#10b4ff"/></linearGradient><linearGradient id="ijp" x1="0" y1="1" x2="1" y2="0"><stop offset="0" stop-color="#ff2d6c"/><stop offset="1" stop-color="#f238c8"/></linearGradient></defs><path d="M3.4 .9 L8.6 .9 L7 6.2 L1.6 8.4 Z" fill="#ffc940"/><path d="M6.6 1.4 L11.6 .9 L13.8 5.8 L6 6.4 Z" fill="#ff2363"/><path d="M.6 7.9 L5.6 5.4 L5.6 10.4 L1.6 10.2 Z" fill="#ef3fc4"/><path d="M.7 11.3 L5.6 9.8 L5.6 15 L3 14.4 Z" fill="#fc801d"/><path d="M3.2 14.6 L5.4 13.6 L5.4 17 L12.4 17 L8.4 19.4 L1.8 21.2 Z" fill="url(#ijp)"/><path d="M13.4 5.6 L15.4 .8 L21.2 5.6 L20.4 11 L21.1 17.2 L17.4 20.2 L13.2 21.2 L8.8 18.6 L12 16.6 L17 16.6 Z" fill="url(#ijb)"/><rect x="5.2" y="5.2" width="11.7" height="11.7" fill="#0a0a0e"/><text x="5.9" y="11.4" font-family="Liberation Serif,serif" font-weight="bold" font-size="7.4" fill="#fff" letter-spacing="-.2">IJ</text><rect x="6.2" y="14.6" width="4.8" height="1.2" fill="#fff"/></svg>
<svg style="left:62px;top:14px" width="22" height="22" viewBox="0 0 22 22" fill="none"><path d="M1 2.5 H20.6 M1 8.2 H20.6 M1 13.8 H20.6 M1 19.5 H20.6" stroke="#c0c2c8" stroke-width="1.7"/></svg>
<div class="abs" style="left:109px;top:12px;width:25px;height:25px;border-radius:5px;background:linear-gradient(135deg,#2893b8,#2fa89c)"></div>
<div class="t" style="left:109px;top:15.2px;width:25px;text-align:center;color:#fff;font-size:15.5px;letter-spacing:0">L</div>
<div class="t" style="left:140.2px;top:15px;letter-spacing:0.554px">library</div>
<svg style="left:193.8px;top:17.2px" width="16" height="16" viewBox="0 0 16 16" fill="none"><path d="M3.6 5.8 L8 10.1 L12.4 5.8" stroke="#b4b8bf" stroke-width="1.3" fill="none" stroke-linecap="round" stroke-linejoin="round"/></svg>
<svg style="left:231px;top:15px" width="20" height="20" viewBox="0 0 20 20" fill="none"><circle cx="5.6" cy="5.2" r="2.5" stroke="#c3c5cb" stroke-width="1.3"/><circle cx="14" cy="7.2" r="2.2" stroke="#c3c5cb" stroke-width="1.3"/><path d="M5.6 7.8 V18.6 M5.6 13.2 H10.8 Q14 13.2 14 9.6" stroke="#c3c5cb" stroke-width="1.3" fill="none"/></svg>
<div class="t" style="left:259.3px;top:15px;letter-spacing:0.359px">main</div>
<svg style="left:301.2px;top:17.2px" width="16" height="16" viewBox="0 0 16 16" fill="none"><path d="M3.6 5.8 L8 10.1 L12.4 5.8" stroke="#b4b8bf" stroke-width="1.3" fill="none" stroke-linecap="round" stroke-linejoin="round"/></svg>
<svg style="left:1190px;top:12px" width="26" height="26" viewBox="0 0 26 26" fill="none"><path d="M20.5 2.6 C19 7 14 9 9 10 C4 11 2.3 14.5 2.3 17.5 C2.3 21.5 5.5 23.6 9 23.6 H13 L23.4 13.4 C23.6 10 22.5 6.5 20.5 2.6 Z" fill="#253627"/><path d="M20.5 2.6 C19 7 14 9 9 10 C4 11 2.3 14.5 2.3 17.5 C2.3 21.5 5.5 23.6 9 23.6 H13 M4.4 21.2 L12.6 23.4 M20.5 2.6 C22.5 6.5 23.6 10 23.4 13.4" stroke="#5a9a5f" stroke-width="1.8" fill="none" stroke-linejoin="round" stroke-linecap="round"/><circle cx="19.5" cy="19.4" r="6.8" fill="#2b2d30"/><path d="M16.6 15.7 A4.7 4.7 0 1 0 22.4 15.7" stroke="#c3c5cb" stroke-width="1.9" fill="none" stroke-linecap="round"/><path d="M19.5 13.6 V18.8" stroke="#c3c5cb" stroke-width="1.9" stroke-linecap="round"/></svg>
<div class="t" style="left:1220.4px;top:15px;letter-spacing:0.514px">LibraryApplication</div>
<div class="abs" style="left:6px;top:57px;width:37px;height:38px;border-radius:7px;background:#43454a"></div>
<svg style="left:12.5px;top:64.5px" width="24" height="24" viewBox="0 0 24 24" fill="none"><path d="M1.6 5.4 Q1.6 3.2 3.8 3.2 H8.6 Q9.5 3.2 10.1 3.8 L12.2 5.9 Q12.8 6.5 13.7 6.5 H20.2 Q22.4 6.5 22.4 8.7 V18.6 Q22.4 20.8 20.2 20.8 H3.8 Q1.6 20.8 1.6 18.6 Z" stroke="#dfe1e5" stroke-width="1.7" fill="none" stroke-linejoin="round"/></svg>
<svg style="left:12px;top:116.5px" width="25" height="20" viewBox="0 0 25 20" fill="none"><circle cx="12.5" cy="10" r="3.7" stroke="#c3c5cb" stroke-width="1.7"/><path d="M0.8 10 H8.8 M16.2 10 H24.2" stroke="#c3c5cb" stroke-width="1.7" stroke-linecap="round"/></svg>
<svg style="left:12px;top:164px" width="26" height="26" viewBox="0 0 26 26" fill="none"><path d="M7.4 1.6 H11.8 L16.8 23 H1.6 Q.4 23 .9 21.8 L6.2 2.5 Q6.5 1.6 7.4 1.6 Z" fill="#21bff0"/><path d="M6.8 17.2 L12.6 13.6 L12.2 20.2 Z" fill="#2b2d30"/><path d="M11.8 2.2 H17.2 L23.5 22.4 H16.8 Z" fill="#1d2f3a" stroke="#21bff0" stroke-width="1.2" stroke-linejoin="round"/></svg>
<svg style="left:12px;top:214px" width="26" height="26" viewBox="0 0 26 26" fill="none"><rect x="3.6" y="2.8" width="7.4" height="8" rx="3.2" stroke="#c3c5cb" stroke-width="1.7" fill="none"/><path d="M13.6 5.4 Q13.6 2.8 16.2 2.8 H19 Q21.8 2.8 21.8 5.6 V8.4" stroke="#c3c5cb" stroke-width="1.7" fill="none"/><path d="M2.6 11.2 C0.2 13.6 0 17 1.6 19.2 C3.2 21.4 6 22.6 9.6 23 L9 20.8 C6.6 20.4 5 19.4 5 17.4 V11.2 Z" fill="#c3c5cb"/><circle cx="17.6" cy="17.6" r="7.9" fill="#2b2d30"/><circle cx="17.6" cy="17.6" r="6.6" fill="#c3c5cb"/><text x="14.7" y="21.6" font-family="Liberation Sans,sans-serif" font-weight="bold" font-size="11" fill="#2b2d30" letter-spacing="0">?</text></svg>
<div class="abs" style="left:9px;top:257px;width:30px;height:1px;background:#43454a"></div>
<svg style="left:12.5px;top:279px" width="24" height="24" viewBox="0 0 24 24" fill="none"><rect x="3.2" y="2.6" width="7" height="7" rx="1.8" stroke="#c3c5cb" stroke-width="1.7"/><rect x="3.2" y="13.4" width="7" height="7" rx="1.8" stroke="#c3c5cb" stroke-width="1.7"/><rect x="13.8" y="13.4" width="7" height="7" rx="1.8" stroke="#c3c5cb" stroke-width="1.7"/></svg>
<svg style="left:12.5px;top:334px" width="24" height="12" viewBox="0 0 24 12" fill="none"><circle cx="4" cy="6.4" r="1.5" fill="#c3c5cb"/><circle cx="12" cy="6.4" r="1.5" fill="#c3c5cb"/><circle cx="20" cy="6.4" r="1.5" fill="#c3c5cb"/></svg>
<svg style="left:12px;top:749px" width="26" height="26" viewBox="0 0 26 26" fill="none"><rect x="1.4" y="9.2" width="7" height="6.4" fill="#9fa1a7"/><rect x="1.4" y="16.7" width="7" height="6.6" fill="#9fa1a7"/><rect x="9.4" y="16.7" width="6.8" height="6.6" fill="#9fa1a7"/><circle cx="16.5" cy="8.2" r="8.2" fill="#2b2d30"/><circle cx="16.5" cy="8.2" r="7" fill="#9fa1a7"/><path d="M13.6 11.6 V6.6 M16.5 11.6 V9.2 M19.4 11.6 V4.6" stroke="#2b2d30" stroke-width="1.6"/></svg>
<svg style="left:12px;top:799.5px" width="25" height="25" viewBox="0 0 25 25" fill="none"><path d="M6.8 2.2 H18.2 L23.9 12 L18.2 21.8 H6.8 L1.1 12 Z" stroke="#c3c5cb" stroke-width="1.7" fill="none" stroke-linejoin="round"/><path d="M9.8 7.2 L18.2 12 L9.8 16.8 Z" stroke="#c3c5cb" stroke-width="1.6" fill="none" stroke-linejoin="round"/></svg>
<svg style="left:12px;top:850px" width="25" height="23" viewBox="0 0 25 23" fill="none"><rect x="1.9" y="2.4" width="21.1" height="18.2" rx="2.4" stroke="#c3c5cb" stroke-width="1.7" fill="none"/><path d="M6.4 7.4 L10.2 10.6 L6.4 13.8 M12 15.2 H18" stroke="#c3c5cb" stroke-width="1.7" fill="none"/></svg>
<svg style="left:12.5px;top:899.5px" width="24" height="24" viewBox="0 0 24 24" fill="none"><circle cx="11.9" cy="11.9" r="10.4" stroke="#c3c5cb" stroke-width="1.7" fill="none"/><path d="M11.9 6.2 V13.2" stroke="#c3c5cb" stroke-width="1.9" stroke-linecap="round"/><circle cx="11.9" cy="17" r="1.3" fill="#c3c5cb"/></svg>
<svg style="left:12.5px;top:948px" width="24" height="26" viewBox="0 0 24 26" fill="none"><circle cx="6.2" cy="6.8" r="2.8" stroke="#c3c5cb" stroke-width="1.7"/><circle cx="16.9" cy="9.5" r="2.6" stroke="#c3c5cb" stroke-width="1.7"/><path d="M6.2 9.8 V24.3 M6.2 18 H12 Q16.9 18 16.9 12.4" stroke="#c3c5cb" stroke-width="1.7" fill="none"/></svg>
<div class="t" style="left:65.2px;top:66.5px;letter-spacing:1.378px;-webkit-text-stroke:.4px #dfe1e5">Project</div>
<svg style="left:131.6px;top:69.3px" width="16" height="16" viewBox="0 0 16 16" fill="none"><path d="M3.6 5.8 L8 10.1 L12.4 5.8" stroke="#b4b8bf" stroke-width="1.3" fill="none" stroke-linecap="round" stroke-linejoin="round"/></svg>
<svg style="left:473px;top:65.7px" width="20" height="20" viewBox="0 0 20 20" fill="none"><circle cx="10" cy="10" r="8.3" fill="#25324d" stroke="#548af7" stroke-width="1.25"/><path d="M13.6 7.6 A4.3 4.3 0 1 0 13.6 12.4" stroke="#548af7" stroke-width="1.3" fill="none"/></svg>
<div class="t" style="left:499px;top:66.5px;letter-spacing:0.382px">Book.java</div>
<svg style="left:586px;top:69px" width="14" height="14" viewBox="0 0 14 14" fill="none"><path d="M2.3 2.3 L11.7 11.7 M11.7 2.3 L2.3 11.7" stroke="#8d9097" stroke-width="1.25"/></svg>
<svg style="left:15px;top:997px" width="14" height="14" viewBox="0 0 14 14" fill="none"><rect x="2.2" y="3" width="9.4" height="9.4" rx="2.2" fill="#25324d" stroke="#548af7" stroke-width="1.3"/></svg>
<div class="t" style="left:31.5px;top:994px;letter-spacing:0.539px;color:#a4a7af">library</div>
<div class="t" style="left:109.60000000000001px;top:994px;letter-spacing:0.968px;color:#a4a7af">src</div>
<div class="t" style="left:164.8px;top:994px;letter-spacing:0.359px;color:#a4a7af">main</div>
<div class="t" style="left:232.3px;top:994px;letter-spacing:0.433px;color:#a4a7af">java</div>
<div class="t" style="left:293.59999999999997px;top:994px;letter-spacing:0.843px;color:#a4a7af">com</div>
<div class="t" style="left:357.9px;top:994px;letter-spacing:0.66px;color:#a4a7af">apptics</div>
<div class="t" style="left:444.4px;top:994px;letter-spacing:0.539px;color:#a4a7af">library</div>
<div class="t" style="left:523.6999999999999px;top:994px;letter-spacing:0.392px;color:#a4a7af">model</div>
<svg style="left:86.6px;top:996.3px" width="16" height="16" viewBox="0 0 16 16" fill="none"><path d="M5.7 3.4 L10.3 8 L5.7 12.6" stroke="#9a9da5" stroke-width="1.3" fill="none" stroke-linecap="round" stroke-linejoin="round"/></svg>
<svg style="left:141.8px;top:996.3px" width="16" height="16" viewBox="0 0 16 16" fill="none"><path d="M5.7 3.4 L10.3 8 L5.7 12.6" stroke="#9a9da5" stroke-width="1.3" fill="none" stroke-linecap="round" stroke-linejoin="round"/></svg>
<svg style="left:209.7px;top:996.3px" width="16" height="16" viewBox="0 0 16 16" fill="none"><path d="M5.7 3.4 L10.3 8 L5.7 12.6" stroke="#9a9da5" stroke-width="1.3" fill="none" stroke-linecap="round" stroke-linejoin="round"/></svg>
<svg style="left:271.5px;top:996.3px" width="16" height="16" viewBox="0 0 16 16" fill="none"><path d="M5.7 3.4 L10.3 8 L5.7 12.6" stroke="#9a9da5" stroke-width="1.3" fill="none" stroke-linecap="round" stroke-linejoin="round"/></svg>
<svg style="left:334.2px;top:996.3px" width="16" height="16" viewBox="0 0 16 16" fill="none"><path d="M5.7 3.4 L10.3 8 L5.7 12.6" stroke="#9a9da5" stroke-width="1.3" fill="none" stroke-linecap="round" stroke-linejoin="round"/></svg>
<svg style="left:421.6px;top:996.3px" width="16" height="16" viewBox="0 0 16 16" fill="none"><path d="M5.7 3.4 L10.3 8 L5.7 12.6" stroke="#9a9da5" stroke-width="1.3" fill="none" stroke-linecap="round" stroke-linejoin="round"/></svg>
<svg style="left:500.5px;top:996.3px" width="16" height="16" viewBox="0 0 16 16" fill="none"><path d="M5.7 3.4 L10.3 8 L5.7 12.6" stroke="#9a9da5" stroke-width="1.3" fill="none" stroke-linecap="round" stroke-linejoin="round"/></svg>
<svg style="left:578px;top:996.3px" width="16" height="16" viewBox="0 0 16 16" fill="none"><path d="M5.7 3.4 L10.3 8 L5.7 12.6" stroke="#9a9da5" stroke-width="1.3" fill="none" stroke-linecap="round" stroke-linejoin="round"/></svg>
<svg style="left:602px;top:994.5px" width="20" height="20" viewBox="0 0 20 20" fill="none"><circle cx="10" cy="10" r="8.3" fill="#25324d" stroke="#548af7" stroke-width="1.25"/><path d="M13.6 7.6 A4.3 4.3 0 1 0 13.6 12.4" stroke="#548af7" stroke-width="1.3" fill="none"/></svg>
<div class="t" style="left:626.6px;top:994px;letter-spacing:0.648px;color:#a4a7af">Book</div>
<svg style="left:674.5px;top:996.3px" width="16" height="16" viewBox="0 0 16 16" fill="none"><path d="M5.7 3.4 L10.3 8 L5.7 12.6" stroke="#9a9da5" stroke-width="1.3" fill="none" stroke-linecap="round" stroke-linejoin="round"/></svg>
<svg style="left:697px;top:994.5px" width="20" height="20" viewBox="0 0 20 20" fill="none"><circle cx="10" cy="10" r="8.3" fill="#45322b" stroke="#c77d55" stroke-width="1.25"/><path d="M12.4 5.8 H11.6 Q9.6 5.8 9.6 7.8 V14.6 M7.4 9.2 H12.2" stroke="#c77d55" stroke-width="1.3" fill="none"/></svg>
<div class="t" style="left:721.4px;top:994px;letter-spacing:0.519px;color:#a4a7af">publishers</div><svg style="left:499.6px;top:103.5px" width="22" height="22" viewBox="0 0 22 22" fill="none"><ellipse cx="10.6" cy="5.6" rx="6.6" ry="2.8" stroke="#c3c5cb" stroke-width="1.3"/><path d="M4 5.6 V16.4 C4 17.9 6.4 19.1 10 19.3 M17.2 5.6 V10.4 M4 9.2 C4 10.7 6.6 11.9 10.4 12 M4 12.8 C4 14.3 6.4 15.5 10 15.7" stroke="#c3c5cb" stroke-width="1.3" fill="none"/><rect x="11.2" y="11.3" width="8.5" height="8.3" fill="#548af7"/><rect x="12.5" y="12.9" width="2.5" height="1.2" fill="#1e1f22"/><rect x="16.2" y="12.9" width="2.5" height="1.2" fill="#1e1f22"/><rect x="12.5" y="15.4" width="2.5" height="3" fill="#1e1f22"/><rect x="16.2" y="15.4" width="2.5" height="3" fill="#1e1f22"/></svg>
<svg style="left:499.6px;top:208.0px" width="22" height="22" viewBox="0 0 22 22" fill="none"><circle cx="11" cy="11" r="8" fill="#45322b" stroke="#c77d55" stroke-width="1.3"/><text x="6.6" y="14.8" font-family="Liberation Sans,sans-serif" font-size="11.5" fill="#c77d55" letter-spacing="0">a</text><path d="M13.2 3 H22 V22 H14 V16 Q12 13 13.2 9 Z" fill="#1e1f22"/><circle cx="11" cy="11" r="8" fill="none" stroke="#c77d55" stroke-width="1.3" stroke-dasharray="0 1.6 44 10"/><circle cx="16.9" cy="11.2" r="2.5" stroke="#c3c5cb" stroke-width="1.4" fill="#1e1f22"/><path d="M16.9 13.8 V19.6 M16.9 17.6 H20" stroke="#c3c5cb" stroke-width="1.4" fill="none"/></svg>
<svg style="left:499.6px;top:287.5px" width="22" height="22" viewBox="0 0 22 22" fill="none"><circle cx="11" cy="11" r="8" fill="#45322b" stroke="#c77d55" stroke-width="1.3"/><text x="7.2" y="15.3" font-family="Liberation Sans,sans-serif" font-size="13.6" fill="#c77d55" letter-spacing="0">a</text></svg>
<svg style="left:499.6px;top:313.5px" width="22" height="22" viewBox="0 0 22 22" fill="none"><circle cx="11" cy="11" r="8" fill="#45322b" stroke="#c77d55" stroke-width="1.3"/><text x="7.2" y="15.3" font-family="Liberation Sans,sans-serif" font-size="13.6" fill="#c77d55" letter-spacing="0">a</text></svg>
<svg style="left:499.6px;top:392.5px" width="22" height="22" viewBox="0 0 22 22" fill="none"><circle cx="11" cy="11" r="8" fill="#45322b" stroke="#c77d55" stroke-width="1.3"/><text x="7.2" y="15.3" font-family="Liberation Sans,sans-serif" font-size="13.6" fill="#c77d55" letter-spacing="0">a</text></svg>
<svg style="left:499.6px;top:576.5px" width="22" height="22" viewBox="0 0 22 22" fill="none"><circle cx="11.1" cy="11" r="6.2" stroke="#c3c5cb" stroke-width="1.3" fill="none"/><circle cx="15.7" cy="6.6" r="3.6" fill="#45322b" stroke="#c77d55" stroke-width="1.4"/><circle cx="6.7" cy="15.4" r="3.6" fill="#45322b" stroke="#c77d55" stroke-width="1.4"/></svg>
<svg style="left:499.6px;top:760.5px" width="22" height="22" viewBox="0 0 22 22" fill="none"><circle cx="11.1" cy="11" r="6.2" stroke="#c3c5cb" stroke-width="1.3" fill="none"/><circle cx="15.7" cy="6.6" r="3.6" fill="#45322b" stroke="#c77d55" stroke-width="1.4"/><circle cx="6.7" cy="15.4" r="3.6" fill="#45322b" stroke="#c77d55" stroke-width="1.4"/></svg>
<svg style="left:499.6px;top:943.5px" width="22" height="22" viewBox="0 0 22 22" fill="none"><circle cx="11.1" cy="11" r="6.2" stroke="#c3c5cb" stroke-width="1.3" fill="none"/><circle cx="15.7" cy="6.6" r="3.6" fill="#45322b" stroke="#c77d55" stroke-width="1.4"/><circle cx="6.7" cy="15.4" r="3.6" fill="#45322b" stroke="#c77d55" stroke-width="1.4"/></svg>
</body></html>
